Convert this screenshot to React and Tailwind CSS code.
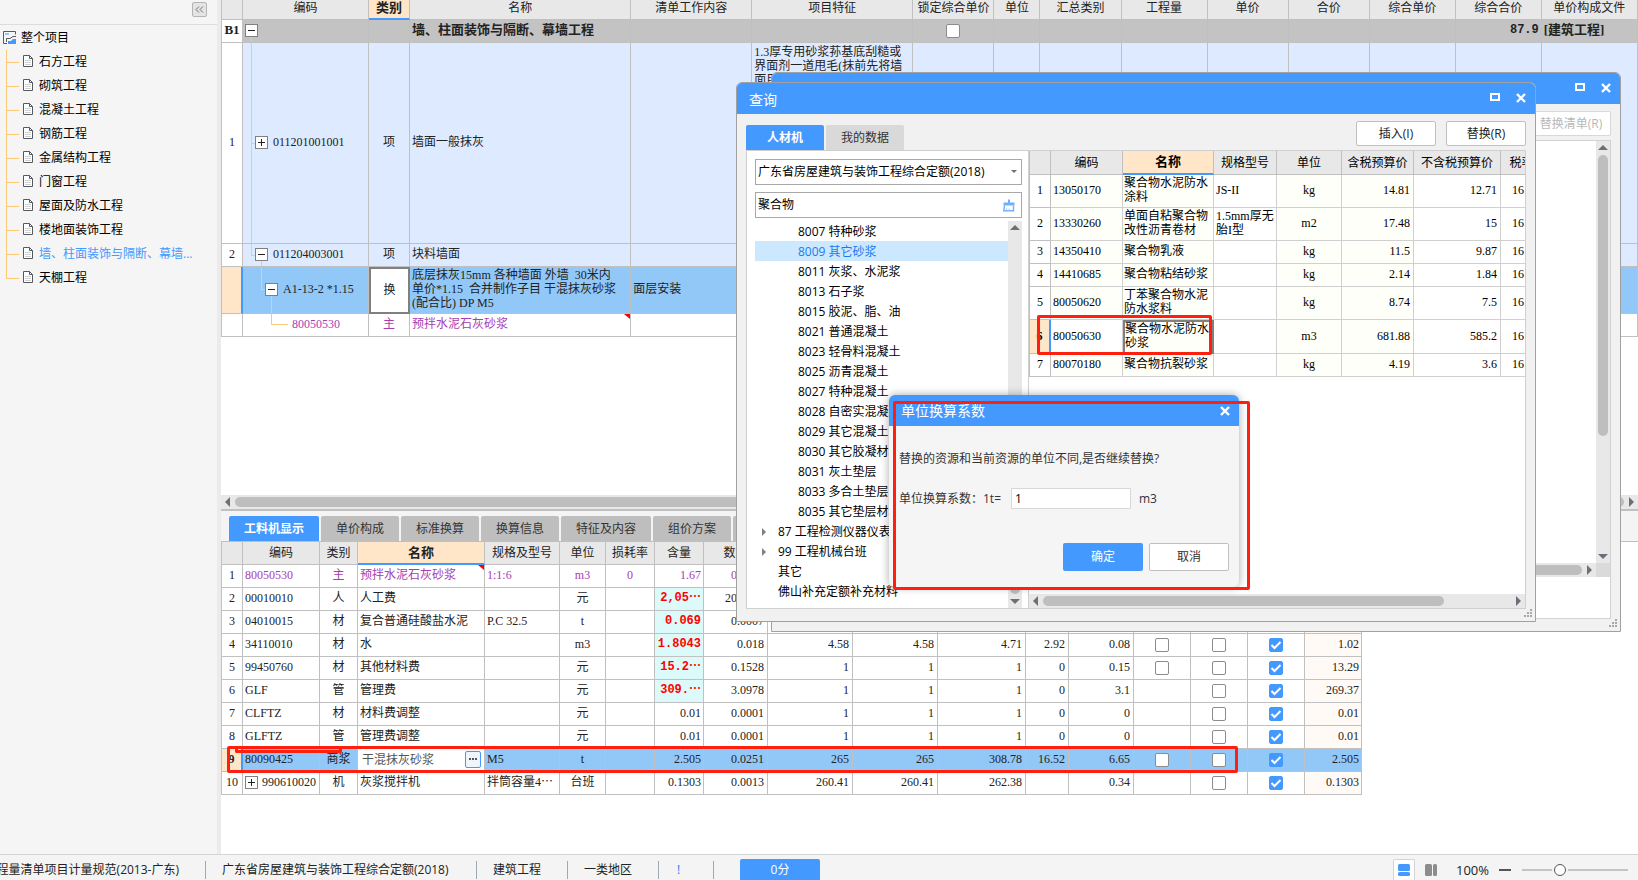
import React from 'react'

const sections = [
    "石方工程",
    "砌筑工程",
    "混凝土工程",
    "钢筋工程",
    "金属结构工程",
    "门窗工程",
    "屋面及防水工程",
    "楼地面装饰工程",
    "墙、柱面装饰与隔断、幕墙...",
    "天棚工程"
];

const billColumns = [
    { title: "", width: "w-[22px]" },
    { title: "编码", width: "w-[126px]" },
    { title: "类别", width: "w-[41px]", active: true },
    { title: "名称", width: "w-[221px]" },
    { title: "清单工作内容", width: "w-[121px]" },
    { title: "项目特征", width: "w-[161px]" },
    { title: "锁定综合单价", width: "w-[81px]" },
    { title: "单位", width: "w-[46px]" },
    { title: "汇总类别", width: "w-[81px]" },
    { title: "工程量", width: "w-[86px]" },
    { title: "单价", width: "w-[81px]" },
    { title: "合价", width: "w-[81px]" },
    { title: "综合单价", width: "w-[86px]" },
    { title: "综合合价", width: "w-[86px]" },
    { title: "单价构成文件", width: "w-[96px]" },
    { title: "", width: "w-[60px]" }
];

const detailTabs = [
    { title: "工料机显示", width: "w-[90px]", active: true },
    { title: "单价构成", width: "w-[78px]" },
    { title: "标准换算", width: "w-[78px]" },
    { title: "换算信息", width: "w-[78px]" },
    { title: "特征及内容", width: "w-[90px]" },
    { title: "组价方案", width: "w-[78px]" },
    { title: "", width: "w-[78px]" }
];

const detailColumns = [
    { title: "", width: "w-[22px]" },
    { title: "编码", width: "w-[77px]" },
    { title: "类别", width: "w-[38px]" },
    { title: "名称", width: "w-[127px]", active: true },
    { title: "规格及型号", width: "w-[75px]" },
    { title: "单位", width: "w-[46px]" },
    { title: "损耗率", width: "w-[49px]" },
    { title: "含量", width: "w-[49px]" },
    { title: "数量", width: "w-[64px]" },
    { title: "", width: "w-[85px]" },
    { title: "", width: "w-[85px]" },
    { title: "", width: "w-[88px]" },
    { title: "", width: "w-[43px]" },
    { title: "", width: "w-[65px]" },
    { title: "", width: "w-[57px]" },
    { title: "", width: "w-[57px]" },
    { title: "", width: "w-[57px]" },
    { title: "", width: "w-[57px]" }
];

const details = [
    { code: "80050530", type: "主", name: "预拌水泥石灰砂浆", spec: "1:1:6", unit: "m3", loss: "0", content: "1.67", nums: ["0.0167", "", "", "", "", ""], a: false, b: false, total: "", purple: true },
    { code: "00010010", type: "人", name: "人工费", spec: "", unit: "元", content: "2,05⋯", nums: ["20.5398", "", "", "", "", ""], b: false, total: "", red: true },
    { code: "04010015", type: "材", name: "复合普通硅酸盐水泥", spec: "P.C 32.5", unit: "t", content: "0.069", nums: ["0.0007", "", "", "", "", ""], a: false, b: false, total: "", red: true },
    { code: "34110010", type: "材", name: "水", spec: "", unit: "m3", content: "1.8043", nums: ["0.018", "4.58", "4.58", "4.71", "2.92", "0.08"], a: false, b: false, total: "1.02", red: true },
    { code: "99450760", type: "材", name: "其他材料费", spec: "", unit: "元", content: "15.2⋯", nums: ["0.1528", "1", "1", "1", "0", "0.15"], a: false, b: false, total: "13.29", red: true },
    { code: "GLF", type: "管", name: "管理费", spec: "", unit: "元", content: "309.⋯", nums: ["3.0978", "1", "1", "1", "0", "3.1"], b: false, total: "269.37", red: true },
    { code: "CLFTZ", type: "材", name: "材料费调整", spec: "", unit: "元", content: "0.01", nums: ["0.0001", "1", "1", "1", "0", "0"], b: false, total: "0.01" },
    { code: "GLFTZ", type: "管", name: "管理费调整", spec: "", unit: "元", content: "0.01", nums: ["0.0001", "1", "1", "1", "0", "0"], b: false, total: "0.01" },
    { code: "80090425", type: "商浆", name: "干混抹灰砂浆", spec: "M5", unit: "t", content: "2.505", nums: ["0.0251", "265", "265", "308.78", "16.52", "6.65"], a: false, b: false, total: "2.505", selected: true },
    { code: "990610020", type: "机", name: "灰浆搅拌机", spec: "拌筒容量4⋯", unit: "台班", content: "0.1303", nums: ["0.0013", "260.41", "260.41", "262.38", "", "0.34"], b: false, total: "0.1303", expand: true }
];

const categories = [
    "8007 特种砂浆",
    "8009 其它砂浆",
    "8011 灰浆、水泥浆",
    "8013 石子浆",
    "8015 胶泥、脂、油",
    "8021 普通混凝土",
    "8023 轻骨料混凝土",
    "8025 沥青混凝土",
    "8027 特种混凝土",
    "8028 自密实混凝土",
    "8029 其它混凝土",
    "8030 其它胶凝材料",
    "8031 灰土垫层",
    "8033 多合土垫层",
    "8035 其它垫层材料"
];

const topCategories = [
    { title: "87 工程检测仪器仪表", arrow: true },
    { title: "99 工程机械台班", arrow: true },
    { title: "其它" },
    { title: "佛山补充定额补充材料" }
];

const resourceColumns = [
    { title: "", width: "w-[22px]" },
    { title: "编码", width: "w-[72px]" },
    { title: "名称", width: "w-[91px]", active: true },
    { title: "规格型号", width: "w-[63px]" },
    { title: "单位", width: "w-[65px]" },
    { title: "含税预算价", width: "w-[72px]" },
    { title: "不含税预算价", width: "w-[87px]" },
    { title: "税率", width: "w-[42px]" }
];

const resources = [
    { code: "13050170", name: "聚合物水泥防水涂料", spec: "JS-II", unit: "kg", price: "14.81", net: "12.71", tall: true },
    { code: "13330260", name: "单面自粘聚合物改性沥青卷材", spec: "1.5mm厚无胎I型", unit: "m2", price: "17.48", net: "15", tall: true },
    { code: "14350410", name: "聚合物乳液", spec: "", unit: "kg", price: "11.5", net: "9.87" },
    { code: "14410685", name: "聚合物粘结砂浆", spec: "", unit: "kg", price: "2.14", net: "1.84" },
    { code: "80050620", name: "丁苯聚合物水泥防水浆料", spec: "", unit: "kg", price: "8.74", net: "7.5", tall: true },
    { code: "80050630", name: "聚合物水泥防水砂浆", spec: "", unit: "m3", price: "681.88", net: "585.2", tall: true, selected: true },
    { code: "80070180", name: "聚合物抗裂砂浆", spec: "", unit: "kg", price: "4.19", net: "3.6" }
];

const Arrow = ({ dir }) => {
    const points = {
        left: "9,2 9,12 4,7",
        right: "5,2 5,12 10,7",
        up: "2,9 12,9 7,4",
        down: "2,5 12,5 7,10"
    };
    return (
        <svg className="w-[14px] h-[14px] shrink-0" viewBox="0 0 14 14">
            <polygon points={points[dir]} fill="#6e6e78" />
        </svg>
    );
};

const CloseIcon = () => (
    <svg className="w-[10px] h-[10px]" viewBox="0 0 10 10">
        <path d="M1 1 L9 9 M9 1 L1 9" stroke="white" strokeWidth="2.4" />
    </svg>
);

const MaximizeIcon = () => (
    <svg className="w-[10px] h-[10px]" viewBox="0 0 10 10">
        <rect x="1" y="1" width="8" height="6" fill="none" stroke="white" strokeWidth="2" />
    </svg>
);

const Grip = () => (
    <svg className="absolute right-[2px] bottom-[3px] w-[9px] h-[9px]" viewBox="0 0 9 9" fill="#a8a8a8">
        <path d="M6 0h2v2h-2z M3 3h2v2h-2z M6 3h2v2h-2z M0 6h2v2h-2z M3 6h2v2h-2z M6 6h2v2h-2z" />
    </svg>
);

const DocIcon = () => (
    <svg className="w-[10px] h-[14px] shrink-0" viewBox="0 0 10 14" fill="none">
        <path d="M0.5 0.5 H6.5 L9.5 3.5 V11.5 H0.5 Z" fill="white" stroke="#555a60" />
        <path d="M6.5 0.5 V3.5 H9.5" stroke="#555a60" />
        <path d="M2 5.5 H8 M2 7.5 H8 M2 9.5 H8" stroke="#d0d0d0" />
    </svg>
);

const ProjectIcon = () => (
    <svg className="w-[14px] h-[14px] shrink-0" viewBox="0 0 14 14" fill="none">
        <path d="M12.5 3.5 V0.5 H0.5 V12.5 H4" stroke="#555a60" />
        <path d="M2 2 H6 V4 H2 Z" fill="#92c8f8" />
        <path d="M3.5 11 V7.5 H7 L10 5.5 H13" stroke="#555a60" />
        <path d="M5 13 V10 H8 L10 8 H13 V13 Z" fill="#4499ff" />
    </svg>
);

const Expander = ({ open }) => (
    <svg className="w-[13px] h-[13px] shrink-0" viewBox="0 0 13 13">
        <rect x="0.5" y="0.5" width="12" height="12" fill="white" stroke="#808080" />
        <path d={open ? "M3 6.5 H10" : "M3 6.5 H10 M6.5 3 V10"} stroke="#222" />
    </svg>
);

const Check = ({ checked, label }) => (
    <span className="inline-grid align-middle">
        <input
            type="checkbox"
            aria-label={label}
            defaultChecked={checked}
            className="col-start-1 row-start-1 appearance-none w-[14px] h-[14px] bg-white border border-[#8c8c8c] rounded-xs checked:bg-[#4499ff] checked:border-[#4499ff]"
        />
        {checked && (
            <svg className="col-start-1 row-start-1 w-[14px] h-[14px] pointer-events-none" viewBox="0 0 14 14" fill="none">
                <path d="M2.5 7 L5.5 10 L11.5 4" stroke="white" strokeWidth="2" />
            </svg>
        )}
    </span>
);

const RedCorner = () => (
    <svg className="absolute right-0 top-0 w-[6px] h-[5px]" viewBox="0 0 6 5">
        <polygon points="0,0 6,0 6,5" fill="#ff0000" />
    </svg>
);

const HeadRow = ({ columns, height, cell }) => (
    <tr className={height}>
        {columns.map((col, i) => (
            <th
                key={i}
                className={`${cell} ${col.width} overflow-hidden whitespace-nowrap border-[#c0c0c0] border-r ${i === 0 ? "border-l" : ""} ${col.active ? "bg-[#ffe6c8] font-bold text-[13px] border-b-2 border-b-[#4499ff]" : "bg-[#e8e8e8] font-normal border-b"}`}
            >
                {col.title}
            </th>
        ))}
    </tr>
);

const Sidebar = () => (
    <aside className="w-[221px] shrink-0 bg-[#f5f5f5] border-r-4 border-[#ebebeb] flex flex-col">
        <div className="h-[25px] shrink-0 border-b border-[#dcdcdc] flex justify-end pt-[2px] pr-[10px]">
            <button aria-label="收起" className="w-[15px] h-[15px] bg-[#e4e4e4] border border-[#b4b4b4] rounded-xs flex items-center justify-center">
                <svg className="w-[9px] h-[7px]" viewBox="0 0 9 7" fill="none">
                    <path d="M4 0.5 L1 3.5 L4 6.5 M8 0.5 L5 3.5 L8 6.5" stroke="#707070" />
                </svg>
            </button>
        </div>
        <div className="pl-[3px] pt-px">
            <div className="h-[24px] flex items-center gap-1">
                <ProjectIcon />
                <span>整个项目</span>
            </div>
            <ul className="ml-[3px]">
                {sections.map((name, i) => (
                    <li key={name} className="relative h-[24px] flex items-center">
                        <span className={`absolute left-0 top-0 w-px bg-[#ffc878] ${i === sections.length - 1 ? "h-[12px]" : "h-[24px]"}`}></span>
                        <span className="w-[13px] h-px bg-[#ffc878] mr-[4px]"></span>
                        <DocIcon />
                        <a href="#" className={`ml-[6px] whitespace-nowrap ${i === 8 ? "text-[#4499ff]" : ""}`}>{name}</a>
                    </li>
                ))}
            </ul>
        </div>
    </aside>
);

const line = "absolute bg-[#ffc878]";
const cell = "border-r border-b border-[#c0c0c0]";
const numCell = "border-l border-r border-b border-[#c0c0c0] bg-white text-center";

const Blanks = ({ count }) => Array.from({ length: count }, (_, i) => <td key={i} className={cell}></td>);

const BillTable = () => (
    <table className="table-fixed w-[1477px] border-separate border-spacing-0 font-['Liberation_Serif','Noto_Sans_CJK_SC',serif] text-[12px] leading-[14px] text-[#222] [&_td]:pb-[2px]">
        <thead>
            <HeadRow columns={billColumns} height="h-[20px]" cell="align-top pt-px" />
        </thead>
        <tbody>
            <tr className="h-[23px] bg-[#c3c3c3] font-bold text-[13px]">
                <td className={numCell}>B1</td>
                <td className={`${cell} relative pl-[2px]`}>
                    <span className={`${line} left-[8px] top-[17px] bottom-0 w-px`}></span>
                    <Expander open />
                </td>
                <td className={cell}></td>
                <td className={`${cell} pl-[2px]`}>墙、柱面装饰与隔断、幕墙工程</td>
                <Blanks count={2} />
                <td className={`${cell} text-center`}><Check label="锁定综合单价" /></td>
                <Blanks count={6} />
                <td className={`${cell} text-right pr-[2px] font-['Liberation_Mono',monospace] text-[12px]`}>87.9</td>
                <td className={`${cell} pl-[2px] whitespace-nowrap`}>[建筑工程]</td>
                <td className={cell}></td>
            </tr>
            <tr className="h-[201px] bg-[#deeaff]">
                <td className={numCell}>1</td>
                <td className={`${cell} relative pl-[12px]`}>
                    <span className={`${line} left-[8px] top-0 bottom-0 w-px`}></span>
                    <span className={`${line} left-[8px] top-1/2 w-[4px] h-px`}></span>
                    <div className="flex items-center gap-[5px]"><Expander />011201001001</div>
                </td>
                <td className={`${cell} text-center`}>项</td>
                <td className={`${cell} pl-[2px]`}>墙面一般抹灰</td>
                <td className={cell}></td>
                <td className={`${cell} pl-[2px] pt-[2px] align-top whitespace-nowrap`}>
                    1.3厚专用砂浆荪基底刮糙或<br />界面剂一道甩毛(抹前先将墙<br />面用
                </td>
                <Blanks count={10} />
            </tr>
            <tr className="h-[23px] bg-[#deeaff]">
                <td className={numCell}>2</td>
                <td className={`${cell} relative pl-[12px]`}>
                    <span className={`${line} left-[8px] top-0 h-[12px] w-px`}></span>
                    <span className={`${line} left-[8px] top-1/2 w-[4px] h-px`}></span>
                    <span className={`${line} left-[18px] top-1/2 bottom-0 w-px`}></span>
                    <div className="relative flex items-center gap-[5px]"><Expander open />011204003001</div>
                </td>
                <td className={`${cell} text-center`}>项</td>
                <td className={`${cell} pl-[2px]`}>块料墙面</td>
                <Blanks count={12} />
            </tr>
            <tr className="h-[47px] bg-[#92c8f8]">
                <td className="border-l border-b border-l-[#c0c0c0] border-b-[#c0c0c0] border-r-2 border-r-[#4499ff] bg-[#ffe6c8]"></td>
                <td className={`${cell} relative pl-[22px]`}>
                    <span className={`${line} left-[18px] top-0 h-[23px] w-px`}></span>
                    <span className={`${line} left-[18px] top-[22px] w-[4px] h-px`}></span>
                    <span className={`${line} left-[28px] top-1/2 bottom-0 w-px`}></span>
                    <div className="relative flex items-center gap-[5px]"><Expander open />A1-13-2 *1.15</div>
                </td>
                <td className="bg-white border-2 border-[#808080] text-center">换</td>
                <td className={`${cell} pl-[2px] whitespace-pre`}>{"底层抹灰15mm 各种墙面 外墙  30米内\n单价*1.15  合并制作子目 干混抹灰砂浆\n(配合比) DP M5"}</td>
                <td className={`${cell} pl-[2px]`}>面层安装</td>
                <Blanks count={11} />
            </tr>
            <tr className="h-[23px] bg-white text-[#a83cb4]">
                <td className={numCell}></td>
                <td className={`${cell} relative pl-[49px]`}>
                    <span className={`${line} left-[28px] top-0 h-[11px] w-px`}></span>
                    <span className={`${line} left-[28px] top-[10px] w-[17px] h-px`}></span>
                    80050530
                </td>
                <td className={`${cell} text-center`}>主</td>
                <td className={`${cell} relative pl-[2px]`}>预拌水泥石灰砂浆<RedCorner /></td>
                <Blanks count={12} />
            </tr>
        </tbody>
    </table>
);

const DetailRow = ({ row, index }) => {
    const tone = row.selected ? "bg-[#92c8f8]" : "bg-white";
    return (
        <tr className={`h-[23px] ${tone} ${row.purple ? "text-[#a83cb4]" : ""}`}>
            {row.selected ? (
                <td className="border-l border-b border-l-[#c0c0c0] border-b-[#c0c0c0] border-r-2 border-r-[#4499ff] bg-[#ffe6c8] text-center font-bold">{index + 1}</td>
            ) : (
                <td className={`${numCell} text-[#222]`}>{index + 1}</td>
            )}
            <td className={`${cell} pl-[2px]`}>
                <div className="flex items-center gap-[4px]">
                    {row.expand && <Expander />}
                    {row.code}
                </div>
            </td>
            <td className={`${cell} text-center`}>{row.type}</td>
            {row.selected ? (
                <td className={`${cell} bg-white`}>
                    <div className="flex items-center justify-between pl-[4px] pr-[3px]">
                        <input aria-label="名称" defaultValue={row.name} className="w-[90px] h-[18px] text-[#555] outline-none" />
                        <button aria-label="选择" className="w-[16px] h-[17px] border border-[#4499ff] bg-[#eef5fc] rounded-xs flex items-center justify-center gap-px">
                            <span className="w-[2px] h-[2px] bg-[#555]"></span>
                            <span className="w-[2px] h-[2px] bg-[#555]"></span>
                            <span className="w-[2px] h-[2px] bg-[#555]"></span>
                        </button>
                    </div>
                </td>
            ) : (
                <td className={`${cell} relative pl-[2px] whitespace-nowrap`}>{row.name}{row.purple && <RedCorner />}</td>
            )}
            <td className={`${cell} pl-[2px] whitespace-nowrap`}>{row.spec}</td>
            <td className={`${cell} text-center`}>{row.unit}</td>
            <td className={`${cell} text-center`}>{row.loss}</td>
            <td className={`${cell} text-right pr-[2px] ${row.red ? "bg-[#dcfafa] text-[#ff0000] font-bold font-['Liberation_Mono','Noto_Sans_CJK_SC',monospace]" : ""}`}>{row.content}</td>
            {row.nums.map((num, i) => (
                <td key={i} className={`${cell} text-right pr-[3px]`}>{num}</td>
            ))}
            <td className={`${cell} text-center`}>{row.a !== undefined && <Check label="暂估" />}</td>
            <td className={`${cell} text-center`}>{row.b !== undefined && <Check label="甲供" />}</td>
            <td className={`${cell} text-center`}><Check checked label="打印" /></td>
            <td className={`${cell} text-right pr-[2px] ${row.selected ? "" : "bg-[#fffaf5]"}`}>{row.total}</td>
        </tr>
    );
};

const DetailPane = () => (
    <section className="shrink-0 border-t-2 border-[#c0c0c0] pb-[59px]">
        <div className="bg-[#f4f4f4] border-b border-[#c0c0c0] pt-[5px] pl-[8px] flex gap-[2px]">
            {detailTabs.map((tab, i) => (
                <button
                    key={i}
                    className={`${tab.width} h-[25px] shrink-0 rounded-t-xs ${tab.active ? "bg-[#4499ff] text-white font-bold" : "bg-[#bebebe] text-[#333]"}`}
                >
                    {tab.title}
                </button>
            ))}
        </div>
        <div className="relative">
            <table className="table-fixed w-[1141px] border-separate border-spacing-0 font-['Liberation_Serif','Noto_Sans_CJK_SC',serif] text-[12px] leading-[14px] text-[#222] [&_td]:pb-[2px]">
                <thead>
                    <HeadRow columns={detailColumns} height="h-[23px]" cell="align-middle" />
                </thead>
                <tbody>
                    {details.map((row, i) => <DetailRow key={row.code} row={row} index={i} />)}
                </tbody>
            </table>
            <div className="absolute left-[6px] top-[204px] w-[1011px] h-[27px] border-3 border-[#ff1f0f] rounded-xs"></div>
            <div className="absolute left-[14px] top-[206px] w-[107px] h-[5px] border-3 border-t-0 border-[#ff1f0f] rounded-b-xs"></div>
        </div>
    </section>
);

const BackDialog = () => (
    <div className="absolute left-[771px] top-[72px] w-[850px] h-[560px] border border-[#a0a0a0] rounded-t-md bg-[#f1f1f1] flex flex-col overflow-hidden">
        <div className="h-[31px] shrink-0 bg-[#4499ff] flex items-center justify-end gap-[16px] pr-[9px] pb-px">
            <button aria-label="最大化"><MaximizeIcon /></button>
            <button aria-label="关闭"><CloseIcon /></button>
        </div>
        <div className="h-[36px] shrink-0 flex justify-end pt-[7px] pr-[9px]">
            <button disabled className="w-[80px] h-[25px] bg-white border border-[#d8d8d8] rounded-xs text-[#b8b8b8] whitespace-nowrap">替换清单(R)</button>
        </div>
        <div className="flex-1 mx-[9px] mb-[12px] bg-white border border-[#d2d2d2] flex flex-col">
            <div className="flex-1 flex justify-end">
                <div className="w-[14px] bg-[#e8e8e8] flex flex-col items-center">
                    <Arrow dir="up" />
                    <div className="w-[10px] h-[281px] bg-[#bebebe] rounded-full"></div>
                    <div className="flex-1"></div>
                    <Arrow dir="down" />
                </div>
            </div>
            <div className="h-[14px] bg-[#e8e8e8] flex items-center mb-[41px]">
                <div className="flex-1 h-[10px] bg-[#bebebe] rounded-full"></div>
                <Arrow dir="right" />
                <div className="w-[14px] h-[14px] bg-[#dadada]"></div>
            </div>
        </div>
        <Grip />
    </div>
);

const CategoryTree = () => (
    <div className="flex-1 flex overflow-hidden">
        <ul className="flex-1 whitespace-nowrap overflow-hidden">
            {categories.map((name, i) => (
                <li key={name} className={`h-[20px] leading-[20px] pt-px pl-[43px] ${i === 1 ? "bg-[#cce8ff] text-[#1a7af0]" : ""}`}>{name}</li>
            ))}
            {topCategories.map((item) => (
                <li key={item.title} className="h-[20px] leading-[20px] pt-px flex items-center">
                    <span className="w-[23px] pl-[3px]">
                        {item.arrow && (
                            <svg className="w-[12px] h-[12px]" viewBox="0 0 12 12">
                                <polygon points="4,2 8,6 4,10" fill="#808080" />
                            </svg>
                        )}
                    </span>
                    {item.title}
                </li>
            ))}
        </ul>
        <div className="w-[14px] bg-[#e8e8e8] flex flex-col items-center">
            <Arrow dir="up" />
            <div className="flex-1"></div>
            <div className="w-[10px] h-[20px] bg-[#bebebe] rounded-full"></div>
            <Arrow dir="down" />
        </div>
    </div>
);

const light = "border-r border-b border-[#d0d0d0]";

const ResourceTable = () => (
    <table className="table-fixed w-[514px] border-separate border-spacing-0 font-['Liberation_Serif','Noto_Sans_CJK_SC',serif] text-[12px] leading-[14px] text-black [&_td]:pb-[2px]">
        <thead>
            <HeadRow columns={resourceColumns} height="h-[24px]" cell="align-middle" />
        </thead>
        <tbody>
            {resources.map((row, i) => (
                <tr key={row.code} className={row.tall ? "h-[33px]" : "h-[23px]"}>
                    {row.selected ? (
                        <td className="border-l border-b border-l-[#c0c0c0] border-b-[#c0c0c0] border-r-2 border-r-[#4499ff] bg-[#ffe6c8] text-center font-bold">{i + 1}</td>
                    ) : (
                        <td className={numCell}>{i + 1}</td>
                    )}
                    <td className={`${light} pl-[2px] ${row.selected ? "bg-white" : "bg-[#fffffa]"}`}>{row.code}</td>
                    <td className={`bg-[#fffffa] ${row.selected ? "border-2 border-[#808080] whitespace-nowrap" : `${light} pl-px`}`}>
                        {row.selected ? <>聚合物水泥防水<br />砂浆</> : row.name}
                    </td>
                    <td className={`${light} pl-[2px] bg-white`}>{row.spec}</td>
                    <td className={`${light} text-center bg-[#fffffa]`}>{row.unit}</td>
                    <td className={`${light} text-right pr-[3px] bg-[#fffffa]`}>{row.price}</td>
                    <td className={`${light} text-right pr-[3px] bg-white`}>{row.net}</td>
                    <td className={`${light} pl-[11px] bg-white`}>16</td>
                </tr>
            ))}
        </tbody>
    </table>
);

const QueryDialog = () => (
    <div className="absolute left-[736px] top-[82px] w-[800px] h-[540px] border border-[#a0a0a0] rounded-t-md bg-[#f1f1f1] flex flex-col overflow-hidden">
        <div className="h-[31px] shrink-0 bg-[#4499ff] text-white flex items-center gap-[16px] pl-[12px] pr-[9px] pb-px">
            <h2 className="flex-1 text-[14px] leading-[20px] pt-[3px]">查询</h2>
            <button aria-label="最大化"><MaximizeIcon /></button>
            <button aria-label="关闭"><CloseIcon /></button>
        </div>
        <div className="h-[36px] shrink-0 mx-[9px] flex items-end gap-[2px]">
            <button className="w-[78px] h-[25px] bg-[#4499ff] text-white font-bold rounded-t-xs">人材机</button>
            <button className="w-[78px] h-[25px] bg-[#d9d9d9] text-[#333] rounded-t-xs">我的数据</button>
            <div className="flex-1 flex justify-end gap-[10px] mb-[4px]">
                <button className="w-[80px] h-[25px] bg-white border border-[#c0c0c0] rounded-xs text-[#222]">插入(I)</button>
                <button className="w-[80px] h-[25px] bg-white border border-[#c0c0c0] rounded-xs text-[#222]">替换(R)</button>
            </div>
        </div>
        <div className="flex-1 min-h-0 mx-[9px] mb-[12px] bg-white border border-[#d0d0d0] flex">
            <div className="w-[282px] shrink-0 border-r border-[#d0d0d0] pl-[8px] pr-[6px] pt-[8px] flex flex-col">
                <div className="relative">
                    <select aria-label="定额库" className="w-full h-[26px] appearance-none border border-[#a8a8a8] bg-white pl-[2px] text-black">
                        <option>广东省房屋建筑与装饰工程综合定额(2018)</option>
                    </select>
                    <svg className="absolute right-[5px] top-[11px] w-[6px] h-[4px]" viewBox="0 0 6 4">
                        <polygon points="0,0 6,0 3,3" fill="#707070" />
                    </svg>
                </div>
                <div className="h-[26px] mt-[7px] mb-[3px] border border-[#a8a8a8] flex items-center pl-[2px] pr-[6px]">
                    <input aria-label="搜索" defaultValue="聚合物" className="flex-1 outline-none text-black" />
                    <button aria-label="清除">
                        <svg className="w-[12px] h-[13px]" viewBox="0 0 12 13" fill="none">
                            <path d="M5 0.5 H7 V3.5 H11.5 V6.5 H0.5 V3.5 H5 Z" fill="#6cb0ff" />
                            <path d="M1.5 6.5 L0.8 11.8 H10.5 V6.5" stroke="#6cb0ff" strokeWidth="1.4" />
                            <path d="M3.5 11.5 V9.5 M6 11.5 V9.5" stroke="#a9d0ff" />
                        </svg>
                    </button>
                </div>
                <CategoryTree />
            </div>
            <div className="relative flex-1 min-w-0 flex flex-col">
                <div className="flex-1 overflow-hidden">
                    <ResourceTable />
                </div>
                <div className="h-[14px] shrink-0 bg-[#e8e8e8] flex items-center">
                    <Arrow dir="left" />
                    <div className="w-[401px] h-[10px] bg-[#bebebe] rounded-full"></div>
                    <div className="flex-1"></div>
                    <Arrow dir="right" />
                </div>
                <div className="absolute left-[8px] top-[164px] w-[175px] h-[40px] border-3 border-[#ff1f0f] rounded-xs"></div>
            </div>
        </div>
        <Grip />
    </div>
);

const FactorDialog = () => (
    <div className="absolute left-[889px] top-[395px] w-[350px] h-[192px] bg-[#f5f5f5] rounded-md shadow-[0_0_8px_rgba(0,0,0,0.35)] text-[#333]">
        <div className="h-[31px] bg-[#4499ff] rounded-t-md text-white flex items-center justify-between pl-[12px] pr-[9px]">
            <h2 className="text-[14px] leading-[20px] pt-px">单位换算系数</h2>
            <button aria-label="关闭"><CloseIcon /></button>
        </div>
        <div className="px-[10px]">
            <p className="pt-[23px] leading-[20px]">替换的资源和当前资源的单位不同,是否继续替换?</p>
            <div className="flex items-center mt-[19px]">
                <label htmlFor="factor" className="w-[112px] whitespace-nowrap">单位换算系数：1t=</label>
                <input id="factor" defaultValue="1" className="w-[120px] h-[21px] bg-white border border-[#d8d8d8] pl-[3px] text-black outline-none" />
                <span className="ml-[8px]">m3</span>
            </div>
            <div className="flex justify-end gap-[6px] mt-[34px]">
                <button className="w-[80px] h-[28px] bg-[#4499ff] text-white rounded-xs">确定</button>
                <button className="w-[80px] h-[28px] bg-white border border-[#c0c0c0] rounded-xs">取消</button>
            </div>
        </div>
        <div className="absolute left-[4px] top-[6px] w-[357px] h-[189px] border-3 border-[#ff1f0f] rounded-xs"></div>
    </div>
);

const Divider = () => <span className="w-px h-[18px] bg-[#a0a8b4] shrink-0"></span>;

const StatusBar = () => (
    <footer className="h-[26px] shrink-0 bg-[#f4f4f4] border-t border-[#d4d4d4] pt-[4px] flex items-center text-[#222] whitespace-nowrap overflow-hidden">
        <div className="w-[205px] shrink-0 flex justify-end pr-[26px] overflow-hidden">程量清单项目计量规范(2013-广东)</div>
        <Divider />
        <span className="w-[270px] pl-[16px]">广东省房屋建筑与装饰工程综合定额(2018)</span>
        <Divider />
        <span className="w-[90px] pl-[16px]">建筑工程</span>
        <Divider />
        <span className="w-[90px] pl-[16px]">一类地区</span>
        <Divider />
        <span className="w-[54px] pl-[18px] text-[#1a7af0]">!</span>
        <Divider />
        <button className="w-[80px] h-[21px] ml-[26px] bg-[#4499ff] text-white rounded-t-xs">0分</button>
        <div className="flex-1"></div>
        <button aria-label="上下布局" className="w-[22px] h-[21px] bg-white border border-b-0 border-[#d4d4d4] rounded-t-xs flex items-center justify-center">
            <svg className="w-[12px] h-[12px]" viewBox="0 0 12 12" fill="#4499ff">
                <rect width="12" height="7" rx="1.5" />
                <rect y="8" width="12" height="4" rx="1.5" />
            </svg>
        </button>
        <button aria-label="左右布局" className="ml-[10px]">
            <svg className="w-[12px] h-[12px]" viewBox="0 0 12 12" fill="#8c8c8c">
                <rect width="7" height="12" rx="1.5" />
                <rect x="8" width="4" height="12" rx="1.5" />
            </svg>
        </button>
        <span className="ml-[19px] w-[43px] text-[13px]">100%</span>
        <button aria-label="缩小" className="w-[12px] h-[12px] flex items-center">
            <span className="w-[12px] h-[2px] bg-[#555]"></span>
        </button>
        <input
            type="range"
            aria-label="缩放"
            defaultValue="34"
            className="appearance-none ml-[11px] mr-[10px] w-[106px] h-[2px] bg-[#c4c4c4] [&::-webkit-slider-thumb]:appearance-none [&::-webkit-slider-thumb]:w-[12px] [&::-webkit-slider-thumb]:h-[12px] [&::-webkit-slider-thumb]:rounded-full [&::-webkit-slider-thumb]:bg-white [&::-webkit-slider-thumb]:border [&::-webkit-slider-thumb]:border-[#555] [&::-webkit-slider-thumb]:shadow-[0_0_0_2px_#f4f4f4]"
        />
    </footer>
);

const App = () => {
    return (
        <div className="relative h-screen overflow-hidden bg-white flex flex-col text-[12px] leading-[16px] text-black font-['Open_Sans','Noto_Sans_CJK_SC',sans-serif]">
            <div className="flex-1 min-h-0 flex">
                <Sidebar />
                <main className="flex-1 min-w-0 flex flex-col">
                    <div className="flex-1 min-h-0 overflow-hidden">
                        <BillTable />
                    </div>
                    <div className="h-[14px] shrink-0 bg-[#e8e8e8] flex items-center">
                        <Arrow dir="left" />
                        <div className="flex-1 h-[10px] bg-[#bebebe] rounded-full"></div>
                        <Arrow dir="right" />
                    </div>
                    <DetailPane />
                </main>
            </div>
            <StatusBar />
            <BackDialog />
            <QueryDialog />
            <FactorDialog />
        </div>
    );
}

export default App
